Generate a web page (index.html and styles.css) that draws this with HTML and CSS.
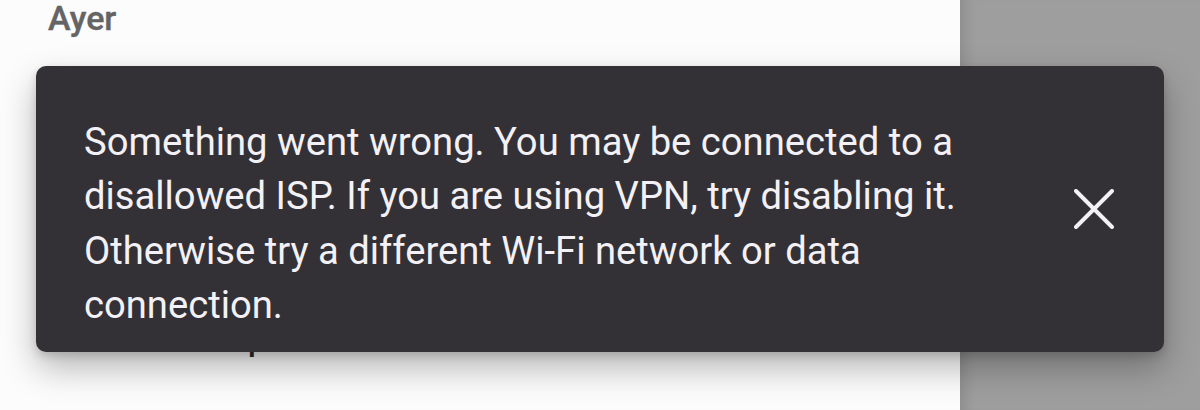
FILE: index.html
```html
<!DOCTYPE html>
<html lang="es">
<head>
<meta charset="utf-8">
<title>Snackbar</title>
<link rel="stylesheet" href="styles.css">
</head>
<body>
<div class="screen">
  <div class="main">
    <div class="section-title">Ayer</div>
    <div class="list-row">
      <div class="row-text">Compra</div>
    </div>
  </div>
  <div class="side"></div>
  <div class="snackbar">
    <p class="snack-text">Something went wrong. You may be connected to a disallowed ISP. If you are using VPN, try disabling it. Otherwise try a different Wi-Fi network or data connection.</p>
    <button class="snack-close" aria-label="Close">
      <svg width="40" height="40" viewBox="0 0 40 40"><path d="M2 2 L38 38 M38 2 L2 38" stroke="#f3f1f5" stroke-width="4" stroke-linecap="round" fill="none"/></svg>
    </button>
  </div>
</div>
</body>
</html>
```
FILE: styles.css
```css
html, body {
  margin: 0;
  padding: 0;
}
body {
  width: 1200px;
  height: 410px;
  overflow: hidden;
  font-family: Roboto, "Liberation Sans", sans-serif;
  background: #fcfcfc;
}
.screen {
  position: relative;
  display: flex;
  width: 1200px;
  height: 410px;
}
.main {
  width: 960px;
  background: #fcfcfc;
  display: flex;
  flex-direction: column;
}
.section-title {
  padding: 0 0 0 48px;
  margin-top: -1px;
  font-size: 34px;
  line-height: 38px;
  font-weight: 500;
  color: #646464;
  -webkit-text-stroke: 0.4px #646464;
}
.list-row {
  display: flex;
  align-items: center;
  margin-top: 284px;
  padding-left: 181px;
}
.row-text {
  font-size: 32px;
  line-height: 38px;
  font-weight: 500;
  color: #2a2a2a;
}
.side {
  flex: 1;
  background: #9e9e9e;
  box-shadow: inset 14px 0 14px -10px rgba(0, 0, 0, 0.12);
}
.snackbar {
  position: absolute;
  left: 36px;
  top: 66px;
  width: 1128px;
  height: 286px;
  box-sizing: border-box;
  background: #333136;
  border-radius: 10px;
  display: flex;
  align-items: center;
  padding: 0 50px 0 48px;
  box-shadow: 0 16px 34px rgba(0, 0, 0, 0.28), 0 4px 8px rgba(0, 0, 0, 0.14);
}
.snack-text {
  flex: 1;
  margin: 29px 0 0 0;
  max-width: 890px;
  color: #f3f1f5;
  font-size: 38.2px;
  line-height: 54.5px;
  font-weight: 400;
}
.snack-close {
  margin-left: auto;
  width: 40px;
  height: 40px;
  padding: 0;
  border: 0;
  background: none;
  display: flex;
}
```
